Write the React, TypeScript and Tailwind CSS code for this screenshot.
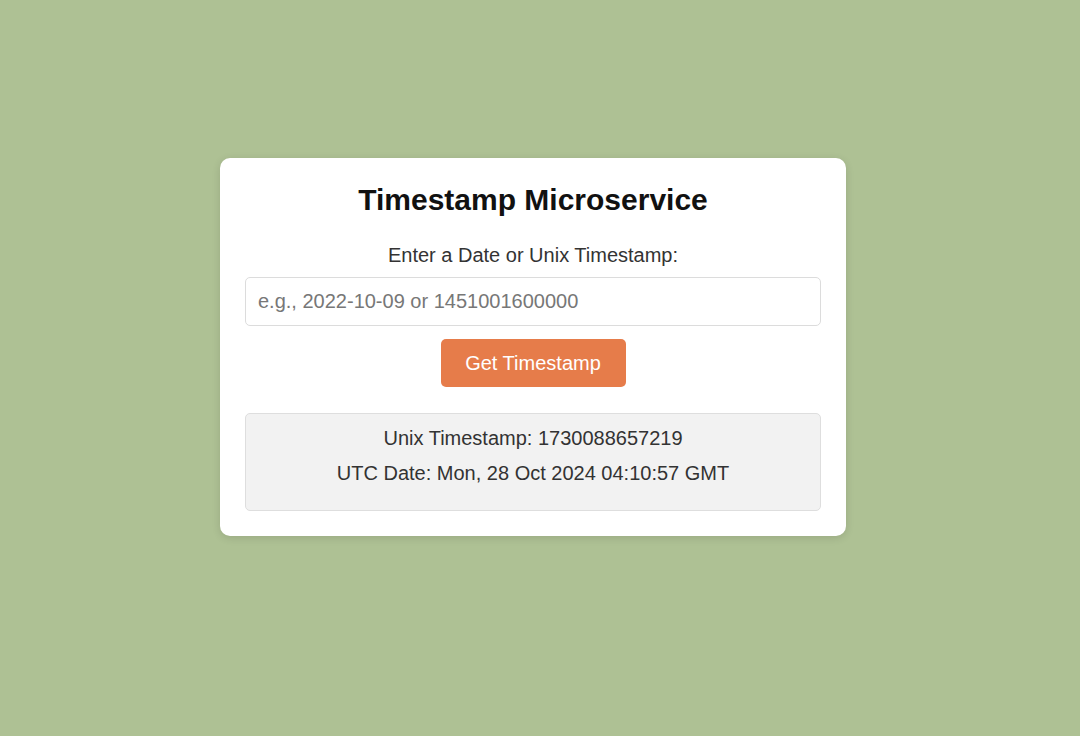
export default function App() {
  return (
    <div
      className="min-h-screen w-full bg-[#aec194] flex justify-center pt-[158px] pr-[14px]"
      style={{ fontFamily: '"Liberation Sans", Arial, sans-serif' }}
    >
      <div className="w-[626px] h-fit bg-white rounded-[10px] shadow-[0_2px_8px_rgba(0,0,0,0.12)] px-[25px] pt-[25px] pb-[25px] flex flex-col items-center">
        <h1 className="text-[30px] leading-[34px] font-bold text-[#111]">Timestamp Microservice</h1>
        <label className="mt-[27px] text-[20px] leading-[23px] text-[#333]">
          Enter a Date or Unix Timestamp:
        </label>
        <input
          type="text"
          placeholder="e.g., 2022-10-09 or 1451001600000"
          className="mt-[10px] w-full h-[49px] border border-[#dcdcdc] rounded-[5px] px-[12px] text-[20px] text-[#333] placeholder:text-[#777] outline-none"
        />
        <button className="mt-[13px] w-[185px] h-[48px] bg-[#e67c4a] rounded-[5px] text-white text-[20px]">
          Get Timestamp
        </button>
        <div className="mt-[26px] w-full bg-[#f2f2f2] border border-[#dedede] rounded-[5px] pt-[13px] pb-[25px] flex flex-col items-center text-[20px] leading-[23px] text-[#333]">
          <p>Unix Timestamp: 1730088657219</p>
          <p className="mt-[12px]">UTC Date: Mon, 28 Oct 2024 04:10:57 GMT</p>
        </div>
      </div>
    </div>
  );
}
